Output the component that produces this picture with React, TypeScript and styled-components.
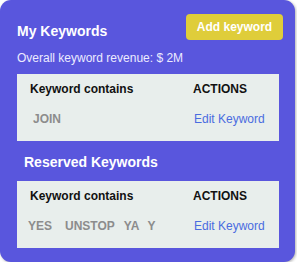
import React from "react";
import styled, { createGlobalStyle } from "styled-components";

interface KeywordGroup {
  title?: string;
  keywords: { text: string; offset: number }[];
}

const GlobalStyle = createGlobalStyle`
  body {
    margin: 0;
    background: #ffffff;
    font-family: "Liberation Sans", Arial, sans-serif;
  }
`;

const Card = styled.div`
  width: 295px;
  height: 262px;
  box-sizing: border-box;
  padding: 14px 17px 0 17px;
  background: #5956dd;
  border-radius: 11px;
  box-shadow: 1px 1px 3px rgba(0, 0, 0, 0.3);
`;

const Header = styled.div`
  display: flex;
  justify-content: space-between;
  align-items: flex-start;
`;

const Title = styled.h2<{ $indent?: number }>`
  margin: ${(p) => (p.$indent ? "13px 0 0" : "9px 0 0")};
  padding-left: ${(p) => p.$indent ?? 0}px;
  font-size: 14px;
  line-height: 16px;
  font-weight: 700;
  color: #ffffff;
`;

const AddButton = styled.button`
  height: 26px;
  width: 97px;
  margin-right: -5px;
  padding: 0;
  border: none;
  border-radius: 4px;
  background: #dfcd3a;
  color: #ffffff;
  font-family: inherit;
  font-size: 12px;
  font-weight: 700;
  cursor: pointer;
`;

const Revenue = styled.p`
  margin: 11px 0 0;
  font-size: 12px;
  line-height: 14px;
  color: #ecebff;
`;

const Table = styled.div<{ $top: number }>`
  margin-top: ${(p) => p.$top}px;
  width: 262px;
  box-sizing: border-box;
  padding: 8px 0 15px 13px;
  background: #e8eeec;
  display: grid;
  grid-template-columns: 163px auto;
  row-gap: 16px;
  font-size: 12px;
  line-height: 14px;
`;

const HeadCell = styled.div`
  font-weight: 700;
  color: #111111;
`;

const KeywordCell = styled.div`
  display: flex;
`;

const Keyword = styled.span<{ $offset: number }>`
  margin-left: ${(p) => p.$offset}px;
  font-weight: 700;
  color: #8c8c8c;
`;

const EditLink = styled.a`
  margin-left: 1px;
  color: #4a6ce0;
  text-decoration: none;
  cursor: pointer;
`;

function KeywordTable({ group, top }: { group: KeywordGroup; top: number }) {
  return (
    <Table $top={top}>
      <HeadCell>Keyword contains</HeadCell>
      <HeadCell>ACTIONS</HeadCell>
      <KeywordCell>
        {group.keywords.map((k) => (
          <Keyword key={k.text} $offset={k.offset}>
            {k.text}
          </Keyword>
        ))}
      </KeywordCell>
      <EditLink>Edit Keyword</EditLink>
    </Table>
  );
}

const myKeywords: KeywordGroup = {
  keywords: [{ text: "JOIN", offset: 3 }],
};

const reserved: KeywordGroup = {
  keywords: [
    { text: "YES", offset: -2 },
    { text: "UNSTOP", offset: 13 },
    { text: "YA", offset: 9 },
    { text: "Y", offset: 8 },
  ],
};

export default function App() {
  return (
    <>
      <GlobalStyle />
      <Card>
        <Header>
          <Title>My Keywords</Title>
          <AddButton>Add keyword</AddButton>
        </Header>
        <Revenue>Overall keyword revenue: $ 2M</Revenue>
        <KeywordTable group={myKeywords} top={9} />
        <Title $indent={7}>Reserved Keywords</Title>
        <KeywordTable group={reserved} top={11} />
      </Card>
    </>
  );
}
